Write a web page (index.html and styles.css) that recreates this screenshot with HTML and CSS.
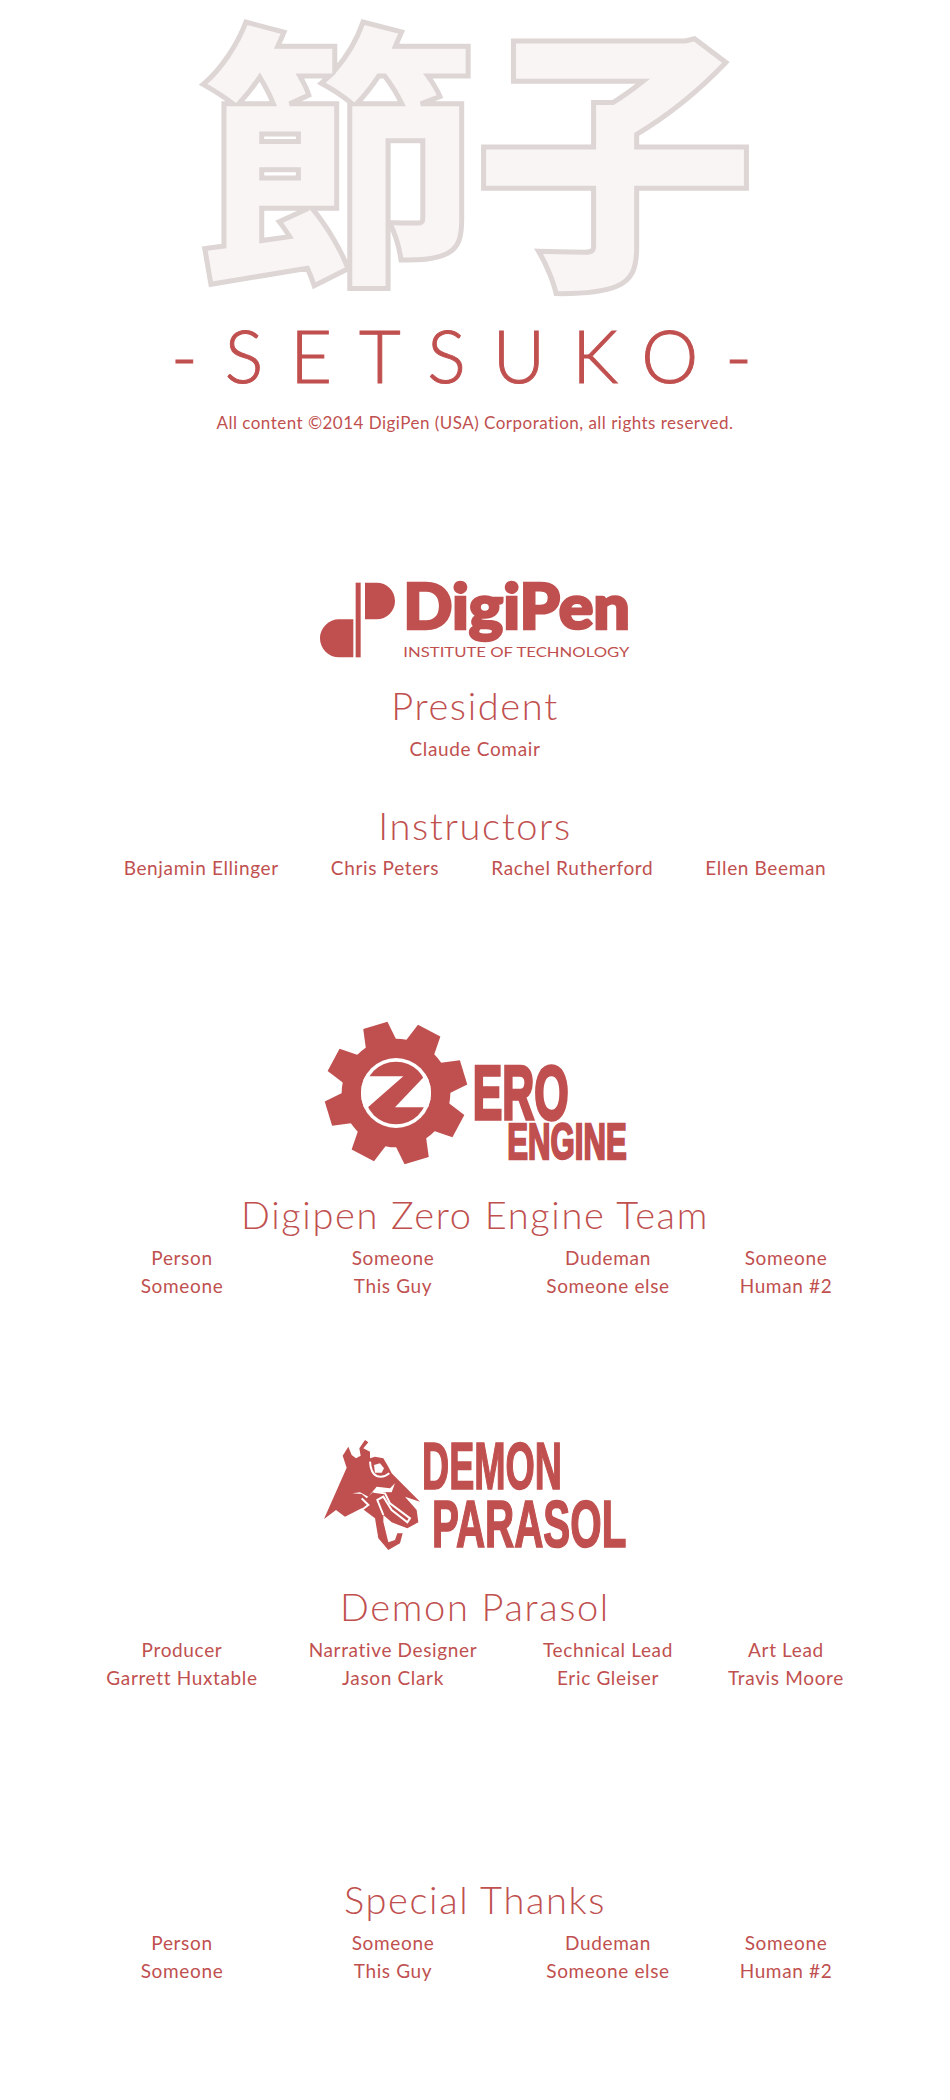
FILE: index.html
```html
<!DOCTYPE html>
<html lang="en">
<head>
<meta charset="utf-8">
<title>Setsuko credits</title>
<link rel="stylesheet" href="styles.css">
</head>
<body>
<main class="page">
  <header class="hero">
    <svg class="kanji" viewBox="0 0 950 310" aria-label="節子">
      <text class="kanji-glyph" x="198" y="266">節</text>
      <text class="kanji-glyph" x="474" y="266">子</text>
    </svg>
    <h1 class="game-title">-SETSUKO-</h1>
    <p class="copyright">All content ©2014 DigiPen (USA) Corporation, all rights reserved.</p>
  </header>

  <section class="digipen">
    <svg class="logo logo-digipen" viewBox="0 0 990 300" role="img" aria-label="DigiPen Institute of Technology">
      <path class="ink" d="M165 38H200A55 55 0 0 1 200 148H165Z"/>
      <rect class="ink" x="137" y="38" width="15" height="224"/>
      <path class="ink" d="M130 148V262H87A57 57 0 0 1 87 148Z"/>
      <text class="dp-word" x="280" y="176" textLength="680" lengthAdjust="spacingAndGlyphs">DigiPen</text>
      <text class="dp-sub" x="280" y="261" textLength="678" lengthAdjust="spacingAndGlyphs">INSTITUTE OF TECHNOLOGY</text>
    </svg>
    <h2 class="heading">President</h2>
    <p class="person">Claude Comair</p>
    <h2 class="heading heading-instructors">Instructors</h2>
    <div class="instructors">
      <span>Benjamin Ellinger</span>
      <span>Chris Peters</span>
      <span>Rachel Rutherford</span>
      <span>Ellen Beeman</span>
    </div>
  </section>

  <section class="zero">
    <svg class="logo logo-zero" viewBox="0 0 930 510" role="img" aria-label="Zero Engine">
      <defs>
        <clipPath id="disc"><circle cx="228" cy="252" r="105"/></clipPath>
      </defs>
      <circle class="ink" cx="228" cy="252" r="163"/>
      <g transform="translate(228 252)">
        <polygon class="ink" points="-38,-212 38,-212 48,-150 -48,-150" transform="rotate(-17)"/>
        <polygon class="ink" points="-38,-212 38,-212 48,-150 -48,-150" transform="rotate(28)"/>
        <polygon class="ink" points="-38,-212 38,-212 48,-150 -48,-150" transform="rotate(73)"/>
        <polygon class="ink" points="-38,-212 38,-212 48,-150 -48,-150" transform="rotate(118)"/>
        <polygon class="ink" points="-38,-212 38,-212 48,-150 -48,-150" transform="rotate(163)"/>
        <polygon class="ink" points="-38,-212 38,-212 48,-150 -48,-150" transform="rotate(208)"/>
        <polygon class="ink" points="-38,-212 38,-212 48,-150 -48,-150" transform="rotate(253)"/>
        <polygon class="ink" points="-38,-212 38,-212 48,-150 -48,-150" transform="rotate(298)"/>
      </g>
      <circle class="cut" cx="228" cy="252" r="105"/>
      <circle class="ink" cx="228" cy="252" r="94"/>
      <g clip-path="url(#disc)">
        <polygon class="cut" points="115,202 250,202 138,300 115,300"/>
        <polygon class="cut" points="340,295 225,295 315,200 340,200"/>
      </g>
      <text class="ze-word" x="458" y="330" textLength="288" lengthAdjust="spacingAndGlyphs">ERO</text>
      <text class="ze-word ze-small" x="562" y="449" textLength="358" lengthAdjust="spacingAndGlyphs">ENGINE</text>
    </svg>
    <h2 class="heading">Digipen Zero Engine Team</h2>
    <div class="roster">
      <p>Person<br>Someone</p>
      <p>Someone<br>This Guy</p>
      <p>Dudeman<br>Someone else</p>
      <p>Someone<br>Human #2</p>
    </div>
  </section>

  <section class="demon">
    <svg class="logo logo-demon" viewBox="0 0 930 390" role="img" aria-label="Demon Parasol">
      <path class="ink" d="M12 267L80 113L68 77L85 50L95 75L108 85L122 77L118 55L135 30L145 37L130 55L150 65L150 85L165 80L190 85L205 110L215 130L300 215L255 200L290 240L295 277L262 295L215 277L190 255L190 275L205 337L225 330L232 310L248 310L240 340L205 360L175 325L165 265L125 235L75 260L48 240Z"/>
      <path class="demon-line" d="M150 95Q152 130 170 138Q190 145 208 130"/>
      <path class="demon-eye" d="M162 105L180 100L192 115L185 128L165 128Z"/>
      <path class="demon-eye" d="M97 190L120 187L145 200L170 170L210 175L225 160L215 187L160 185L140 205L125 192Z"/>
      <path class="demon-line" d="M125 205L145 225L125 240M160 185L195 190L210 220L270 265L262 277L215 240L190 200L172 210L190 255"/>
      <text class="dm-word" x="306" y="178" textLength="420" lengthAdjust="spacingAndGlyphs">DEMON</text>
      <text class="dm-word" x="336" y="352" textLength="583" lengthAdjust="spacingAndGlyphs">PARASOL</text>
    </svg>
    <h2 class="heading">Demon Parasol</h2>
    <div class="roster">
      <p>Producer<br>Garrett Huxtable</p>
      <p>Narrative Designer<br>Jason Clark</p>
      <p>Technical Lead<br>Eric Gleiser</p>
      <p>Art Lead<br>Travis Moore</p>
    </div>
  </section>

  <section class="thanks">
    <h2 class="heading">Special Thanks</h2>
    <div class="roster">
      <p>Person<br>Someone</p>
      <p>Someone<br>This Guy</p>
      <p>Dudeman<br>Someone else</p>
      <p>Someone<br>Human #2</p>
    </div>
  </section>
</main>
</body>
</html>
```
FILE: styles.css
```css
* { box-sizing: border-box; }
html, body { margin: 0; padding: 0; background: #fff; }
body {
  font-family: "Lato", "Noto Sans", sans-serif;
  color: #c0504f;
}
.page { width: 950px; min-height: 2100px; text-align: center; overflow: hidden; }
.ink { fill: #c0504f; }
.cut { fill: #fff; }
h1, h2, p { margin: 0; font-weight: 400; }

.kanji { display: block; width: 950px; height: 310px; }
.kanji-glyph {
  font-family: "Noto Sans CJK JP", sans-serif;
  font-size: 282px;
  font-weight: 900;
  fill: #f8f5f4;
  stroke: #ded5d5;
  stroke-width: 5px;
}
.game-title {
  margin-top: 5px;
  font-size: 72px;
  line-height: 80px;
  font-weight: 300;
  letter-spacing: 27px;
  white-space: nowrap;
  -webkit-text-stroke: 1px #c0504f;
}
.copyright { margin-top: 16px; font-size: 17px; line-height: 24px; letter-spacing: 0.48px; }

.logo { display: block; margin: 0 auto; }
.digipen { margin-top: 135px; }
.logo-digipen { width: 330px; height: 100px; }
.dp-word { font-family: "Lato", sans-serif; font-weight: 900; font-size: 190px; fill: #c0504f; stroke: #c0504f; stroke-width: 8px; }
.dp-sub { font-family: "Lato", sans-serif; font-weight: 400; font-size: 39px; fill: #c0504f; }

.heading { margin-top: 12px; font-size: 38px; line-height: 46px; font-weight: 300; letter-spacing: 1.65px; }
.heading-instructors { margin-top: 39px; }
.person { margin-top: 7px; font-size: 19px; line-height: 28px; letter-spacing: 0.65px; }
.instructors {
  margin-top: 6px;
  display: flex;
  justify-content: center;
  gap: 52px;
  font-size: 19px;
  line-height: 28px;
  letter-spacing: 0.65px;
}
.roster {
  margin: 7px 0 0 95px;
  display: grid;
  grid-template-columns: 174px 248px 182px 174px;
  font-size: 19px;
  line-height: 28px;
  letter-spacing: 0.65px;
}

.zero { margin-top: 127px; }
.logo-zero { width: 310px; height: 170px; }
.ze-word { font-family: "Liberation Sans", sans-serif; font-weight: 700; font-size: 226px; fill: #c0504f; stroke: #c0504f; stroke-width: 10px; }
.ze-small { font-size: 148px; stroke-width: 7px; }

.demon { margin-top: 130px; }
.demon .heading { margin-top: 23px; }
.logo-demon { width: 310px; height: 130px; }
.demon-eye { fill: #fff; }
.demon-line { fill: none; stroke: #fff; stroke-width: 6px; }
.dm-word { font-family: "Liberation Sans", sans-serif; font-weight: 700; font-size: 200px; fill: #c0504f; stroke: #c0504f; stroke-width: 5px; }

.thanks { margin-top: 184px; }
.thanks .heading { margin-top: 0; }
```
